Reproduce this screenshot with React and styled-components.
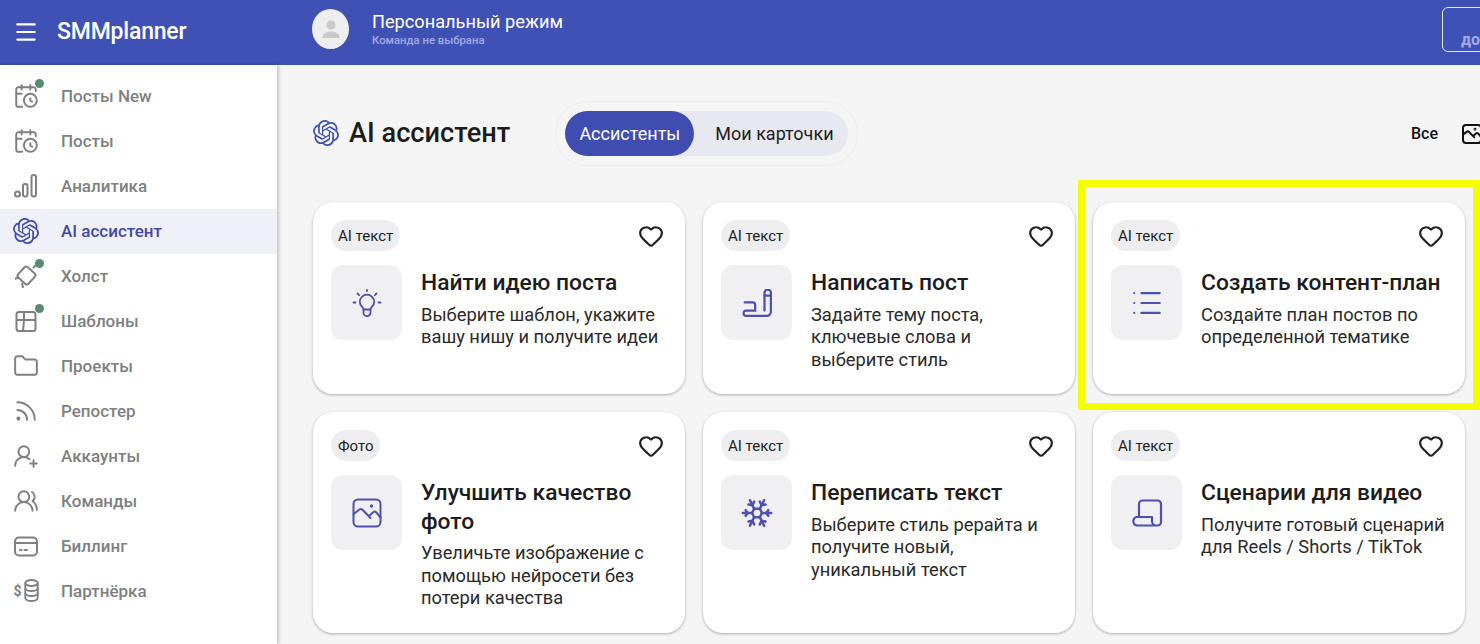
import React from 'react';
import styled, { createGlobalStyle } from 'styled-components';
import {
  CalendarClock, Folder, Heart, List, Menu, Rss, Snowflake, UserRoundPlus, UsersRound,
} from 'lucide-react';
import { SiOpenai } from 'react-icons/si';

const BRAND = '#3f51b5';
const ACCENT = '#4f4fb0';

const GlobalStyle = createGlobalStyle`
  html, body { margin: 0; padding: 0; }
  body { font-family: Roboto, "Liberation Sans", sans-serif; background: #f5f5f5; }
  * { box-sizing: border-box; }
`;

const Page = styled.div`
  height: 644px;
  width: 1480px;
  overflow: hidden;
  display: flex;
  flex-direction: column;
`;

const Header = styled.header`
  flex: 0 0 65px;
  width: 1560px;
  background: ${BRAND};
  display: flex;
  align-items: center;
  color: #fff;
`;

const Brand = styled.div`
  width: 277px;
  display: flex;
  align-items: center;
  gap: 18px;
  padding: 0 0 2px 13px;
  font-size: 23px;
  font-weight: 500;
  letter-spacing: -0.2px;
`;

const Team = styled.div`
  align-self: flex-start;
  margin: 9px 0 0 35px;
  display: flex;
  align-items: center;
  gap: 23px;
`;

const Avatar = styled.div`
  width: 37px;
  height: 40px;
  border-radius: 50%;
  background: #eeeeee;
  display: flex;
  align-items: center;
  justify-content: center;
`;

const TeamName = styled.div`
  font-size: 18.2px;
  line-height: 22px;
  margin-bottom: 1px;
`;

const TeamHint = styled.div`
  font-size: 11.3px;
  font-weight: 500;
  line-height: 14px;
  color: #a3abe6;
`;

const LimitButton = styled.div`
  align-self: flex-start;
  margin: 7px 0 0 auto;
  width: 118px;
  height: 45px;
  border: 1.5px solid #e4e7f8;
  border-radius: 6px;
  padding: 0 0 1px 18px;
  display: flex;
  align-items: flex-end;
  font-size: 16px;
  font-weight: 700;
  line-height: 20px;
  color: #a3abe6;
`;

const Body = styled.div`
  flex: 1;
  display: flex;
  min-height: 0;
`;

const Sidebar = styled.nav`
  flex: 0 0 277px;
  background: #fff;
  padding-top: 9px;
  box-shadow: 1px 0 4px rgba(0, 0, 0, 0.28);
`;

const NavRow = styled.div`
  height: 45px;
  display: flex;
  align-items: center;
  gap: 22px;
  padding: 0 0 2px 13px;
  font-size: 17px;
  font-weight: 500;
  color: ${(p) => (p.$active ? '#4349a8' : '#808080')};
  background: ${(p) => (p.$active ? '#f0f0f8' : 'transparent')};
`;

const NavIcon = styled.span`
  position: relative;
  width: 26px;
  height: 26px;
  display: flex;
  align-items: center;
  justify-content: center;
`;

const Dot = styled.span`
  position: absolute;
  top: -4px;
  right: -5px;
  width: 9px;
  height: 9px;
  border-radius: 50%;
  background: #5b8a72;
`;

const Dollar = styled.span`
  font-size: 14px;
  font-weight: 700;
  margin-right: 2px;
`;

const Main = styled.main`
  flex: 1;
  padding: 37px 0 0 36px;
  min-width: 0;
`;

const TopRow = styled.div`
  width: 1169px;
  height: 63px;
  display: flex;
  align-items: center;
`;

const Title = styled.h1`
  margin: 0 45px 0 0;
  padding-bottom: 1px;
  display: flex;
  align-items: center;
  gap: 10px;
  font-size: 27.2px;
  font-weight: 500;
  color: #1c1c1c;
`;

const TabsRing = styled.div`
  padding: 9px;
  border: 1px solid #eeeeee;
  border-radius: 32px;
`;

const Tabs = styled.div`
  display: flex;
  height: 45px;
  border-radius: 23px;
  background: #e8e8f0;
`;

const Tab = styled.div`
  display: flex;
  align-items: center;
  padding: 0 ${(p) => (p.$active ? '14px' : '14px 0 21px')};
  border-radius: 23px;
  font-size: 18px;
  color: ${(p) => (p.$active ? '#fff' : '#1c1c1c')};
  background: ${(p) => (p.$active ? '#3f4cb0' : 'transparent')};
`;

const Filters = styled.div`
  margin-left: auto;
  display: flex;
  align-items: center;
  gap: 24px;
  font-size: 16px;
  font-weight: 500;
  color: #111;
`;

const Cards = styled.div`
  margin-top: 37px;
  display: grid;
  grid-template-columns: repeat(3, 372px);
  gap: 18px;
  align-items: stretch;
`;

const Card = styled.article`
  position: relative;
  padding: 18px 18px 23px;
  border-radius: 20px;
  background: #fff;
  box-shadow: 0 1px 3px rgba(0, 0, 0, 0.3);

  ${(p) => p.$marked && `
    &::after {
      content: '';
      position: absolute;
      inset: -22px -15px -16px -15px;
      border: 7.5px solid #f6ff00;
      pointer-events: none;
    }
  `}
`;

const CardTop = styled.div`
  display: flex;
  align-items: center;
  justify-content: space-between;
  padding-right: 3px;
  color: #222;
`;

const Chip = styled.span`
  height: 31px;
  padding: 0 7px;
  display: flex;
  align-items: center;
  border-radius: 16px;
  background: #eeeef0;
  font-size: 15px;
  color: #222;
`;

const CardBody = styled.div`
  margin-top: 14px;
  display: flex;
  gap: 19px;
`;

const IconBox = styled.div`
  flex: 0 0 71px;
  height: 75px;
  border-radius: 12px;
  background: #f0f0f2;
  color: ${ACCENT};
  display: flex;
  align-items: center;
  justify-content: center;
`;

const CardText = styled.div`
  padding-top: 4px;
  min-width: 0;
`;

const CardTitle = styled.h2`
  margin: 0 0 6px;
  font-size: 22.8px;
  font-weight: 500;
  line-height: 28.5px;
  color: #1c1c1c;
`;

const CardDesc = styled.p`
  margin: 0;
  font-size: 18.3px;
  line-height: 22.5px;
  color: #2a2a2a;
`;

const AnalyticsIcon = () => (
  <svg width="26" height="26" viewBox="0 0 26 26" fill="none" stroke="currentColor" strokeWidth="2">
    <circle cx="4.5" cy="21" r="2.5" />
    <rect x="10" y="11" width="4.5" height="12.5" rx="2" />
    <rect x="18.5" y="2" width="4.5" height="21.5" rx="2" />
  </svg>
);

const CanvasIcon = () => (
  <svg width="26" height="26" viewBox="0 0 26 26" fill="none" stroke="currentColor" strokeWidth="2" strokeLinejoin="round">
    <rect x="6.5" y="5.5" width="14" height="14" rx="2.5" transform="rotate(42 13.5 12.5)" />
    <path d="M20 5l3-3M6 14l-4 2M9 20l1 5" />
  </svg>
);

const TemplatesIcon = () => (
  <svg width="26" height="26" viewBox="0 0 26 26" fill="none" stroke="currentColor" strokeWidth="2" strokeLinejoin="round">
    <rect x="3.5" y="4" width="19" height="19" rx="2.5" />
    <path d="M11 4v8M3.5 12H22.5M11 12l-1 11" />
  </svg>
);

const BillingIcon = () => (
  <svg width="26" height="26" viewBox="0 0 26 26" fill="none" stroke="currentColor" strokeWidth="2" strokeLinecap="round">
    <rect x="2" y="4.5" width="22" height="18" rx="4" />
    <path d="M2 10h22M7 17h1.5M11.5 17h2.5" />
  </svg>
);

const CoinsIcon = () => (
  <svg width="15" height="23" viewBox="0 0 15 23" fill="none" stroke="currentColor" strokeWidth="1.9">
    <ellipse cx="7.5" cy="4" rx="6.2" ry="3" />
    <path d="M1.3 4v15c0 1.7 2.8 3 6.2 3s6.2-1.3 6.2-3V4" />
    <path d="M1.3 9c0 1.7 2.8 3 6.2 3s6.2-1.3 6.2-3M1.3 14c0 1.7 2.8 3 6.2 3s6.2-1.3 6.2-3" />
  </svg>
);

const WriteIcon = () => (
  <svg width="30" height="28" viewBox="0 0 28 26" fill="none" stroke="currentColor" strokeWidth="2.1" strokeLinecap="round">
    <path d="M2.5 12.5H10a2.4 2.4 0 0 1 2.3 2.4V20H4a2.5 2.5 0 0 0 0 5h19a4 4 0 0 0 4-4V3.5a3 3 0 0 0-6 0V20" />
    <path d="M21 6h6" />
  </svg>
);

const IdeaIcon = () => (
  <svg width="30" height="28" viewBox="0 0 30 28" fill="none" stroke="currentColor" strokeWidth="1.8" strokeLinecap="round" strokeLinejoin="round">
    <path d="M11.5 20.5c0-2.5-3.7-3.6-3.7-7.6a7.2 7.2 0 0 1 14.4 0c0 4-3.7 5.1-3.7 7.6z" />
    <path d="M11.5 20.5v3.2a3.5 3.5 0 0 0 7 0v-3.2" />
    <path d="M1.5 13.5h2M26.5 13.5h2M5.5 4.5l1.6 1.6M24.5 4.5l-1.6 1.6M15 1v1" />
  </svg>
);

const PhotoIcon = ({ size, weight }) => (
  <svg width={size} height={size} viewBox="0 0 30 30" fill="none" stroke="currentColor" strokeWidth={weight} strokeLinecap="round" strokeLinejoin="round">
    <rect x="1.5" y="1.5" width="27" height="27" rx="4.5" />
    <path d="M1.5 16l6-4.5c1-.7 2-.6 3 .3l8 8.2M18 17l3.5-3c.9-.7 1.800-.6 2.600.2l4.400 5.300" />
    <circle cx="19.500" cy="8" r="0.700" />
  </svg>
);

const ScriptIcon = () => (
  <svg width="32" height="28" viewBox="0 0 32 28" fill="none" stroke="currentColor" strokeWidth="2.2" strokeLinejoin="round">
    <path d="M8 18V5a3.500 3.500 0 0 1 3.500-3.500h15A3.500 3.500 0 0 1 30 5v18a3.500 3.500 0 0 1-3.500 3.500H6a4.300 4.300 0 0 1 0-8.500h15v4.250a4.250 4.250 0 0 0 4.250 4.250" />
  </svg>
);

const OpenAiIcon = ({ size, color }) => <SiOpenai size={size} color={color} />;

const UserSilhouette = () => (
  <svg width="22" height="22" viewBox="0 0 22 22" fill="#c9c9c9">
    <circle cx="11" cy="7" r="4.5" />
    <path d="M2.5 19c0-3.600 5-5.500 8.500-5.500s8.500 1.900 8.500 5.500v1h-17z" />
  </svg>
);

const PartnerIcon = () => (
  <>
    <Dollar>$</Dollar>
    <CoinsIcon />
  </>
);

const navItems = [
  { label: 'Посты New', icon: <CalendarClock size={26} strokeWidth={1.8} />, dot: true },
  { label: 'Посты', icon: <CalendarClock size={26} strokeWidth={1.8} /> },
  { label: 'Аналитика', icon: <AnalyticsIcon /> },
  { label: 'AI ассистент', icon: <OpenAiIcon size={26} color="#3f4cb0" />, active: true },
  { label: 'Холст', icon: <CanvasIcon />, dot: true },
  { label: 'Шаблоны', icon: <TemplatesIcon />, dot: true },
  { label: 'Проекты', icon: <Folder size={26} strokeWidth={1.8} /> },
  { label: 'Репостер', icon: <Rss size={26} strokeWidth={1.8} /> },
  { label: 'Аккаунты', icon: <UserRoundPlus size={26} strokeWidth={1.8} /> },
  { label: 'Команды', icon: <UsersRound size={26} strokeWidth={1.8} /> },
  { label: 'Биллинг', icon: <BillingIcon /> },
  { label: 'Партнёрка', icon: <PartnerIcon /> },
];

const cards = [
  {
    chip: 'AI текст',
    title: 'Найти идею поста',
    text: 'Выберите шаблон, укажите вашу нишу и получите идеи',
    icon: <IdeaIcon />,
  },
  {
    chip: 'AI текст',
    title: 'Написать пост',
    text: 'Задайте тему поста, ключевые слова и выберите стиль',
    icon: <WriteIcon />,
  },
  {
    chip: 'AI текст',
    title: 'Создать контент-план',
    text: 'Создайте план постов по определенной тематике',
    icon: <List size={34} strokeWidth={1.5} />,
    marked: true,
  },
  {
    chip: 'Фото',
    title: 'Улучшить качество фото',
    text: 'Увеличьте изображение с помощью нейросети без потери качества',
    icon: <PhotoIcon size={30} weight={2} />,
  },
  {
    chip: 'AI текст',
    title: 'Переписать текст',
    text: 'Выберите стиль рерайта и получите новый, уникальный текст',
    icon: <Snowflake size={34} strokeWidth={1.8} />,
  },
  {
    chip: 'AI текст',
    title: 'Сценарии для видео',
    text: 'Получите готовый сценарий для Reels / Shorts / TikTok',
    icon: <ScriptIcon />,
  },
];

const App = () => (
  <Page>
    <GlobalStyle />
    <Header>
      <Brand>
        <Menu size={26} strokeWidth={2} />
        SMMplanner
      </Brand>
      <Team>
        <Avatar><UserSilhouette /></Avatar>
        <div>
          <TeamName>Персональный режим</TeamName>
          <TeamHint>Команда не выбрана</TeamHint>
        </div>
      </Team>
      <LimitButton>до</LimitButton>
    </Header>
    <Body>
      <Sidebar>
        {navItems.map((item) => (
          <NavRow key={item.label} $active={item.active}>
            <NavIcon>
              {item.icon}
              {item.dot && <Dot />}
            </NavIcon>
            {item.label}
          </NavRow>
        ))}
      </Sidebar>
      <Main>
        <TopRow>
          <Title>
            <OpenAiIcon size={26} color={BRAND} />
            AI ассистент
          </Title>
          <TabsRing>
            <Tabs>
              <Tab $active>Ассистенты</Tab>
              <Tab>Мои карточки</Tab>
            </Tabs>
          </TabsRing>
          <Filters>
            Все
            <PhotoIcon size={20} weight={3} />
          </Filters>
        </TopRow>
        <Cards>
          {cards.map((card) => (
            <Card key={card.title} $marked={card.marked}>
              <CardTop>
                <Chip>{card.chip}</Chip>
                <Heart size={26} strokeWidth={2} />
              </CardTop>
              <CardBody>
                <IconBox>{card.icon}</IconBox>
                <CardText>
                  <CardTitle>{card.title}</CardTitle>
                  <CardDesc>{card.text}</CardDesc>
                </CardText>
              </CardBody>
            </Card>
          ))}
        </Cards>
      </Main>
    </Body>
  </Page>
);

export default App;
